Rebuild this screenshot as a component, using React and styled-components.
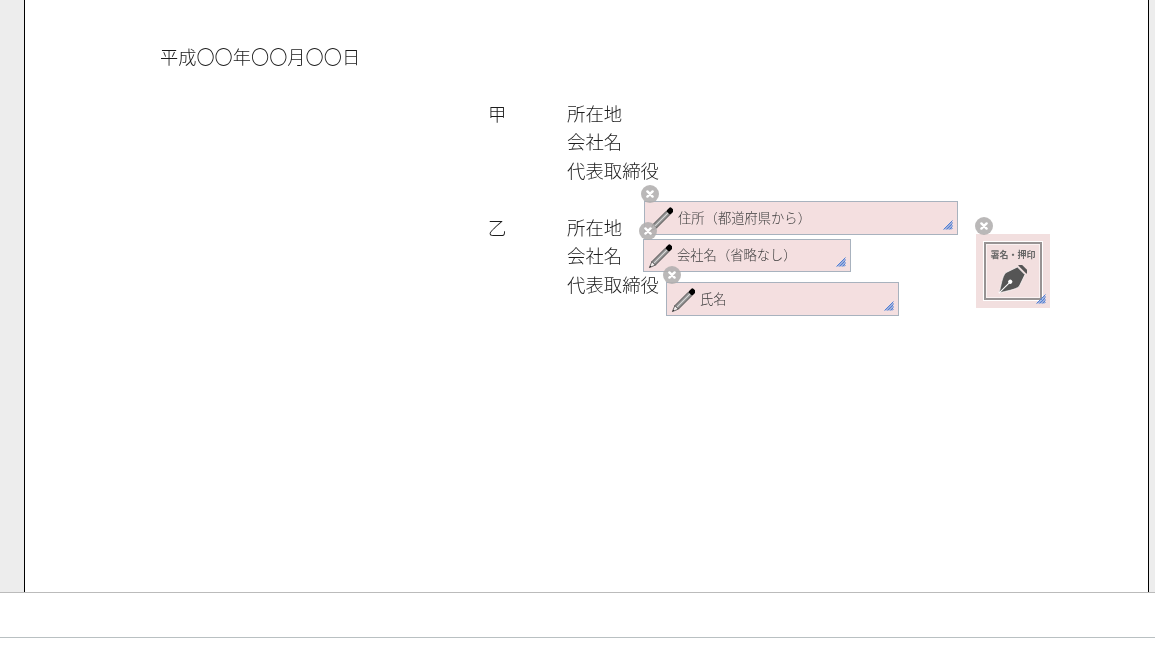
import React from "react";
import styled, { createGlobalStyle } from "styled-components";

const Global = createGlobalStyle`
  html, body { margin: 0; padding: 0; height: 100%; background: #fff; overflow: hidden; }
  body { font-family: "Noto Sans CJK JP", "Liberation Sans", sans-serif; }
`;
const Viewer = styled.main`
  height: 592px;
  background: #ededed;
  padding: 0 6px 0 24px;
  box-sizing: border-box;
  overflow: hidden;
`;
const Sheet = styled.section`
  position: relative;
  height: 592px;
  background: #fff;
  border-left: 1px solid #000;
  border-right: 1px solid #000;
  padding: 42px 0 0 135px;
  box-sizing: border-box;
  color: #1c1c1c;
  font-size: 18.2px;
  line-height: 28.5px;
  font-weight: 300;
`;
const DateLine = styled.div`
  filter: blur(0.3px);
`;
const Parties = styled.div`
  display: grid;
  grid-template-columns: 79px 1fr;
  row-gap: 28.5px;
  margin: 28px 0 0 328px;
  font-size: 18.4px;
  filter: blur(0.3px);
`;
const PartyLabel = styled.div`
  line-height: 28.5px;
`;
const PartyLines = styled.div`
  display: flex;
  flex-direction: column;
`;
const Field = styled.div`
  position: absolute;
  left: ${p => p.$x - 25}px;
  top: ${p => p.$y}px;
  width: ${p => p.$w}px;
  height: ${p => p.$h}px;
  box-sizing: border-box;
  background: #f4dfe0;
  border: 1px solid #a8b2be;
  display: flex;
  align-items: center;
  padding-left: 4px;
  color: #3c3c3c;
  font-size: 13.3px;
  line-height: 1;
`;
const FieldLabel = styled.span`
  white-space: nowrap;
  margin: -1px 0 0 5px;
  filter: blur(0.25px);
`;
const SignatureField = styled.div`
  position: absolute;
  left: ${p => p.$x - 25}px;
  top: ${p => p.$y}px;
  width: 74px;
  height: 74px;
  background: #f2dfdf;
  padding: 8px;
  box-sizing: border-box;
`;
const SignatureBox = styled.div`
  height: 58px;
  box-sizing: border-box;
  border: 2px solid #979393;
  outline: 1px solid #fff;
  box-shadow: inset 0 0 0 1px rgba(255, 255, 255, 0.6);
  display: flex;
  flex-direction: column;
  align-items: center;
  padding-top: 5px;
  color: #666;
  font-size: 9px;
  line-height: 12px;
  font-weight: 700;
  white-space: nowrap;
`;
const SignatureLabel = styled.span`
  filter: blur(0.2px);
`;
const Close = styled.button`
  position: absolute;
  left: ${p => p.$left ?? -4}px;
  top: ${p => p.$top ?? -17}px;
  width: 18px;
  height: 18px;
  padding: 0;
  border: 0;
  border-radius: 50%;
  background: rgba(176, 174, 174, 0.88);
  display: flex;
  align-items: center;
  justify-content: center;
  z-index: 2;
`;
const Handle = styled.svg`
  position: absolute;
  right: 4px;
  bottom: 4px;
`;
const Footer = styled.footer`
  height: 44px;
  background: #fff;
  border-top: 1px solid #bbb;
  border-bottom: 1px solid #b9c0c2;
`;

const CloseIcon = () => (
  <svg width="8" height="8" viewBox="0 0 8 8">
    <path d="M1.4 1.4 6.6 6.6M6.6 1.4 1.4 6.6" stroke="#fff" strokeWidth="2.4" strokeLinecap="round" />
  </svg>
);
const Pencil = () => (
  <svg width="24" height="26" viewBox="0 0 24 26" style={{ flex: "none", marginTop: 3 }}>
    <g transform="rotate(45 12 13)">
      <rect x="9.25" y="-3" width="5.5" height="6" rx="1.4" fill="#000" />
      <rect x="9.5" y="3" width="5" height="19" fill="#8e8e8e" stroke="#3a3a3a" strokeWidth="0.7" />
      <path d="M12 3V22" stroke="#dcdcdc" strokeWidth="1.1" />
      <path d="M9.5 22H14.5L12 28Z" fill="#f1eeee" stroke="#3a3a3a" strokeWidth="0.7" />
      <path d="M11.2 26H12.8L12 28Z" fill="#222" />
    </g>
  </svg>
);
const Hatch = () => (
  <Handle width="10" height="10" viewBox="0 0 10 10">
    <path d="M0.5 9.5 9.5 0.5M2 9.5 9.5 2M3.5 9.5 9.5 3.5M5 9.5 9.5 5M6.5 9.5 9.5 6.5M8 9.5 9.5 8" stroke="#4f80d6" strokeWidth="1" />
  </Handle>
);
const Nib = () => (
  <svg width="32" height="32" viewBox="0 0 30 30" style={{ margin: "4px 0 0 -5px", flex: "none" }}>
    <g transform="rotate(45 15 15)">
      <rect x="9.5" y="-3" width="11" height="3" fill="#555" />
      <path d="M10 1.5H20L24 13C24 18 18 25 15 31 12 25 6 18 6 13Z" fill="#555" stroke="#fff" strokeWidth="0.6" />
      <path d="M15 31V17" stroke="#fff" strokeWidth="1" />
      <circle cx="15" cy="16" r="2" fill="#fff" />
    </g>
  </svg>
);

const fields = [
  { x: 644, y: 201, w: 314, h: 34, label: "住所（都道府県から）" },
  { x: 643, y: 239, w: 208, h: 33, label: "会社名（省略なし）", closeLeft: -5, closeTop: -18 },
  { x: 666, y: 282, w: 233, h: 34, label: "氏名" },
];

const Party = ({ mark }) => (
  <>
    <PartyLabel>{mark}</PartyLabel>
    <PartyLines>
      <span>所在地</span>
      <span>会社名</span>
      <span>代表取締役</span>
    </PartyLines>
  </>
);

export default function App() {
  return (
    <>
      <Global />
      <Viewer>
        <Sheet>
          <DateLine>平成〇〇年〇〇月〇〇日</DateLine>
          <Parties>
            <Party mark="甲" />
            <Party mark="乙" />
          </Parties>
          {fields.map(f => (
            <Field key={f.label} $x={f.x} $y={f.y} $w={f.w} $h={f.h}>
              <Close $left={f.closeLeft} $top={f.closeTop} aria-label="削除"><CloseIcon /></Close>
              <Pencil />
              <FieldLabel>{f.label}</FieldLabel>
              <Hatch />
            </Field>
          ))}
          <SignatureField $x={976} $y={234}>
            <Close $left={-1} $top={-17} aria-label="削除"><CloseIcon /></Close>
            <SignatureBox>
              <SignatureLabel>署名・押印</SignatureLabel>
              <Nib />
            </SignatureBox>
            <Hatch />
          </SignatureField>
        </Sheet>
      </Viewer>
      <Footer />
    </>
  );
}
